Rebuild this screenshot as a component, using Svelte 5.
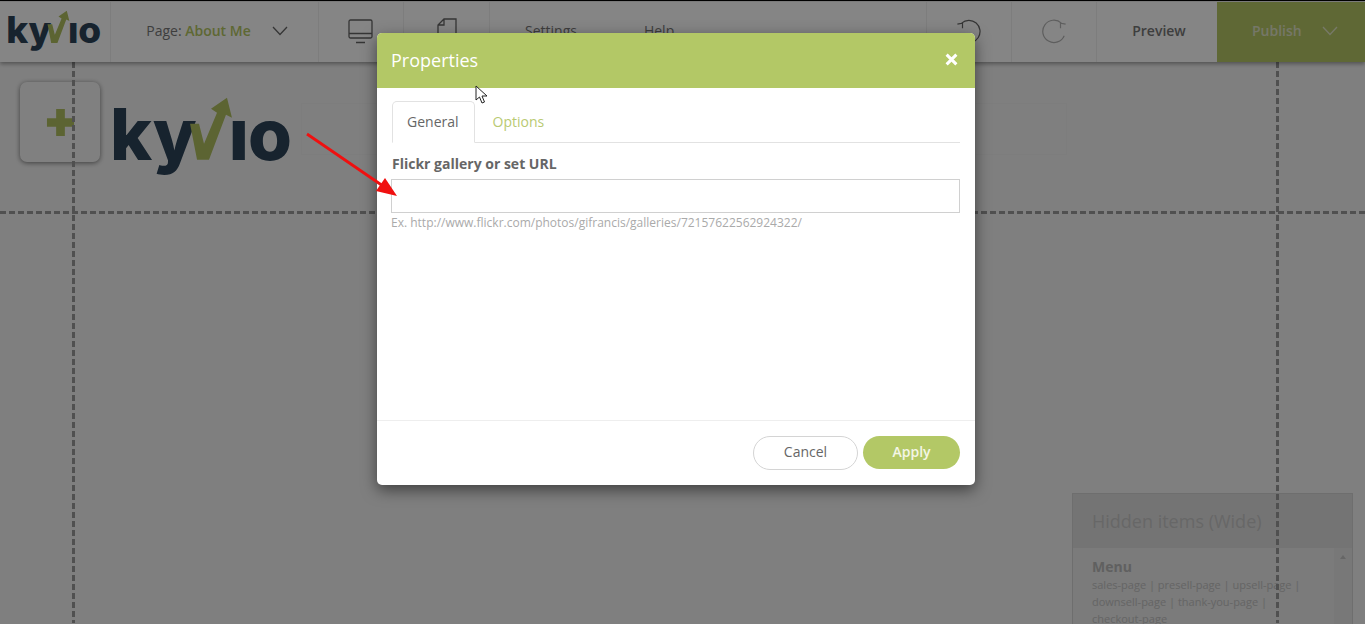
<script>
  const hiddenLinks = 'sales-page | presell-page | upsell-page | downsell-page | thank-you-page | checkout-page';
  let url = $state('');
</script>

{#snippet logo(cls)}
  <div class="logo {cls}">
    <span>ky</span>
    <svg class="tick" viewBox="0 0 44 64" aria-hidden="true">
      <polygon points="1,27 10,27 15,47 28,16 22,12 38,1 43,21 37,18 20,63 8,63" />
    </svg>
    <span class="tail">ıo</span>
  </div>
{/snippet}

<div class="screen">
  <header class="topbar">
    <div class="cell brand">{@render logo('small')}</div>
    <div class="cell page-select">
      <span>Page: <b>About Me</b></span>
      <svg class="chev" viewBox="0 0 16 10"><path d="M1 1l7 7.5L15 1" /></svg>
    </div>
    <div class="cell device">
      <svg viewBox="0 0 26 25" width="26" height="25" class="ico">
        <rect x="1" y="1" width="23" height="18" rx="1.5" />
        <path d="M1 14.5h23M8 23.5h9" />
      </svg>
    </div>
    <div class="cell pages">
      <svg viewBox="0 0 22 26" width="22" height="26" class="ico">
        <path d="M8 1h12v24H2V7zM8 1v6H2" />
      </svg>
    </div>
    <nav class="cell menu">
      <span>Settings</span>
      <span>Help</span>
    </nav>
    <div class="cell hist">
      <svg viewBox="0 0 28 28" width="26" height="26" class="ico">
        <path d="M6 5.500A12 12 0 1 1 9 25.500M1.500 6.500L7 5.500V11" />
      </svg>
    </div>
    <div class="cell hist off">
      <svg viewBox="0 0 28 28" width="26" height="26" class="ico">
        <path d="M22 5.500A12 12 0 1 0 25 19M26.500 6.500L21 5.500V11" />
      </svg>
    </div>
    <div class="cell preview">Preview</div>
    <div class="publish">
      <span>Publish</span>
      <svg class="chev" viewBox="0 0 16 10"><path d="M1 1l7 7.500L15 1" /></svg>
    </div>
  </header>

  <main class="canvas">
    <div class="head-row">
      <button class="add" aria-label="Add">
        <svg viewBox="0 0 30 30" width="29" height="29"><path d="M10.500 1h9v9.500H29v9h-9.500V29h-9v-9.500H1v-9h9.500z" /></svg>
      </button>
      {@render logo('big')}
      <div class="menu-slot"></div>
    </div>
    <aside class="hidden-items">
      <h3>Hidden items (Wide)</h3>
      <div class="hidden-body">
        <div class="hidden-list">
          <strong>Menu</strong>
          <p>{hiddenLinks}</p>
        </div>
        <div class="scroll-track"><span></span></div>
      </div>
    </aside>
    <i class="guide v left"></i>
    <i class="guide v right"></i>
    <i class="guide h"></i>
  </main>

  <div class="backdrop"></div>

  <section class="modal">
    <div class="modal-head">
      <h2>Properties</h2>
      <svg viewBox="0 0 12 12" width="13" height="13"><path d="M1.500 1.500l9 9M10.500 1.500l-9 9" /></svg>
    </div>
    <div class="modal-body">
      <div class="tabs">
        <span class="tab active">General</span>
        <span class="tab">Options</span>
      </div>
      <label for="flickr">Flickr gallery or set URL</label>
      <input id="flickr" bind:value={url} />
      <small>Ex. http://www.flickr.com/photos/gifrancis/galleries/72157622562924322/</small>
    </div>
    <div class="modal-foot">
      <button class="btn cancel">Cancel</button>
      <button class="btn apply">Apply</button>
    </div>
  </section>

  <!-- annotation and pointer sit over the dialog -->
  <svg class="arrow" viewBox="0 0 100 70" width="100" height="70">
    <path d="M2 2L78 54" />
    <polygon points="92,64 71,59 80,46" />
  </svg>
  <svg class="cursor" viewBox="0 0 14 20" width="14" height="20">
    <path d="M1 1v14l3.500-3 2.500 6 2.500-1-2.500-6h5z" />
  </svg>
</div>

<style>
  :global(body) {
    margin: 0;
    font-family: "Open Sans", "Noto Sans", sans-serif;
  }

  .screen {
    position: relative;
    width: 1365px;
    height: 624px;
    overflow: hidden;
    background: #f4f4f4;
    border-top: 1px solid #000;
    box-sizing: border-box;
    color: #777;
  }

  .topbar {
    display: flex;
    height: 60px;
    margin-top: 1px;
    background: #fff;
    box-shadow: 0 2px 4px rgba(0, 0, 0, 0.35);
    position: relative;
    z-index: 1;
    font-size: 14px;
  }

  .cell {
    display: flex;
    align-items: center;
    justify-content: center;
    box-sizing: border-box;
    border-right: 1px solid #f0f0f0;
    padding-bottom: 3px;
    flex: none;
  }

  .brand { width: 111px; padding: 0 3px 5px 0; }
  .page-select { width: 208px; gap: 21px; padding-left: 5px; }
  .page-select b { color: #b5c763; font-weight: 600; }
  .device { width: 85px; padding-top: 1px; }
  .pages { width: 86px; justify-content: flex-start; padding-left: 32px; }
  .menu { width: 437px; justify-content: flex-start; gap: 67px; padding-left: 35px; }
  .hist { width: 85px; }
  .off .ico { stroke: #b4b4b4; }
  .preview { width: 120px; border: 0; padding-left: 4px; font-weight: 600; color: #777; }

  .publish {
    flex: 1;
    display: flex;
    align-items: center;
    gap: 20px;
    padding: 0 0 3px 35px;
    background: #b7c866;
    color: #e0e4c8;
    font-weight: 600;
  }

  .chev {
    width: 16px;
    height: 10px;
    fill: none;
    stroke: #666;
    stroke-width: 1.300;
  }

  .publish .chev { stroke: #e4e8c8; }

  .ico {
    fill: none;
    stroke: #666;
    stroke-width: 1.300;
  }

  /* logo: real letters, only the tick is drawn */
  .logo {
    display: flex;
    align-items: baseline;
    font-family: Inter, "Liberation Sans", sans-serif;
    font-weight: 800;
    color: #2c4359;
    line-height: 1;
  }

  .logo.small { font-size: 37px; }
  .logo.big { font-size: 71px; }

  .tick {
    width: 0.62em;
    height: 0.9em;
    margin: 0 -0.06em 0 -0.11em;
    fill: #b0c060;
    align-self: flex-end;
    transform: translateY(-0.13em);
  }

  .tail { letter-spacing: -0.01em; }

  .canvas {
    position: relative;
    height: 561px;
  }

  .head-row {
    display: flex;
    align-items: flex-start;
    padding: 20px 0 0 20px;
  }

  .add {
    flex: none;
    width: 80px;
    height: 80px;
    padding: 0;
    display: grid;
    place-items: center;
    background: #f6f6f6;
    border: 0;
    border-radius: 7px;
    box-shadow: 0 1px 5px rgba(0, 0, 0, 0.5);
  }

  .add svg { fill: #b0c060; }

  .logo.big {
    margin: 17px 0 0 10px;
  }

  .menu-slot {
    flex: none;
    width: 766px;
    height: 52px;
    margin: 21px 0 0 10px;
    box-sizing: border-box;
    border: 1px solid #efefef;
  }

  .hidden-items {
    position: absolute;
    left: 1072px;
    top: 431px;
    width: 281px;
    height: 140px;
    box-sizing: border-box;
    border: 1px solid #d4d4d4;
    background: #ebebeb;
  }

  .hidden-items h3 {
    margin: 0;
    height: 54px;
    padding-left: 19px;
    line-height: 54px;
    font-size: 18px;
    font-weight: 400;
    color: #c6c6c6;
    background: #dfdfdf;
  }

  .hidden-body {
    display: flex;
    font-size: 11px;
    color: #c2c2c2;
    line-height: 17px;
  }

  .hidden-list {
    flex: 1;
    padding: 9px 22px 0 19px;
  }

  .hidden-body strong { font-size: 14px; color: #b8b8b8; display: block; line-height: 19px; }
  .hidden-body p { margin: 0; }

  .scroll-track {
    flex: none;
    width: 18px;
    height: 90px;
    background: #e6e6e6;
    position: relative;
  }

  .scroll-track span {
    position: absolute;
    left: 6px;
    top: 7px;
    border: 3px solid transparent;
    border-top: 0;
    border-bottom: 4px solid #c4c4c4;
  }

  .guide {
    position: absolute;
  }

  .guide.v {
    top: 0;
    bottom: 0;
    width: 3px;
    background-image: repeating-linear-gradient(to bottom, #999 0 6px, transparent 6px 9px);
  }

  .guide.left { left: 72px; }
  .guide.right { left: 1276px; }

  .guide.h {
    left: 0;
    right: 0;
    top: 149px;
    height: 3px;
    background-image: repeating-linear-gradient(to right, #999 0 6px, transparent 6px 9px);
  }

  .backdrop {
    position: absolute;
    inset: 0;
    z-index: 2;
    background: rgba(0, 0, 0, 0.48);
  }

  .modal {
    position: absolute;
    z-index: 3;
    left: 377px;
    top: 32px;
    width: 598px;
    height: 452px;
    display: flex;
    flex-direction: column;
    background: #fff;
    border-radius: 5px;
    overflow: hidden;
    box-shadow: 0 5px 15px rgba(0, 0, 0, 0.5);
  }

  .modal-head {
    flex: none;
    height: 55px;
    box-sizing: border-box;
    padding: 0 17px 2px 14px;
    display: flex;
    align-items: center;
    justify-content: space-between;
    background: #b3c866;
    color: #fff;
  }

  .modal-head h2 {
    margin: 0;
    font-size: 18px;
    font-weight: 400;
  }

  .modal-head svg {
    fill: none;
    stroke: #fff;
    stroke-width: 2.800;
  }

  .modal-body {
    flex: 1;
    padding: 13px 15px 0 15px;
    display: flex;
    flex-direction: column;
  }

  .tabs {
    display: flex;
    height: 42px;
    box-sizing: border-box;
    border-bottom: 1px solid #e2e2e2;
    font-size: 14px;
    flex: none;
  }

  .tab {
    padding: 0 18px;
    line-height: 41px;
    color: #b9ca72;
  }

  .tab.active {
    padding: 0 15px 0 14px;
    height: 42px;
    box-sizing: border-box;
    border: 1px solid #e2e2e2;
    border-bottom-color: #fff;
    border-radius: 5px 5px 0 0;
    color: #666;
    line-height: 40px;
  }

  label {
    margin-top: 11px;
    font-size: 14px;
    font-weight: 700;
    color: #666;
    line-height: 20px;
  }

  input {
    margin: 5px 0 0 -1px;
    height: 34px;
    box-sizing: border-box;
    width: 569px;
    border: 1px solid #d0d0d0;
    padding: 0 8px;
    background: #fff;
    outline: none;
  }

  small {
    font-size: 12px;
    color: #aaa;
    line-height: 16px;
    margin: 2px 0 0 -1px;
  }

  .modal-foot {
    flex: none;
    height: 65px;
    box-sizing: border-box;
    display: flex;
    align-items: center;
    justify-content: flex-end;
    gap: 5px;
    padding: 0 15px 1px 0;
    border-top: 1px solid #eee;
  }

  .btn {
    font: inherit;
    font-size: 14px;
    border-radius: 17px;
    height: 34px;
    padding: 0 0 2px;
  }

  .cancel {
    width: 105px;
    background: #fff;
    border: 1px solid #d4d4d4;
    color: #666;
  }

  .apply {
    width: 97px;
    height: 33px;
    background: #b3c866;
    border: 0;
    color: #f4f6e6;
    font-weight: 600;
  }

  .arrow {
    position: absolute;
    z-index: 4;
    left: 305px;
    top: 131px;
  }

  .arrow path {
    fill: none;
    stroke: #f01010;
    stroke-width: 2.800;
  }

  .arrow polygon { fill: #f01010; }

  .cursor {
    position: absolute;
    z-index: 4;
    left: 475px;
    top: 84px;
  }

  .cursor path {
    fill: #fff;
    stroke: #222;
    stroke-width: 1;
  }
</style>
